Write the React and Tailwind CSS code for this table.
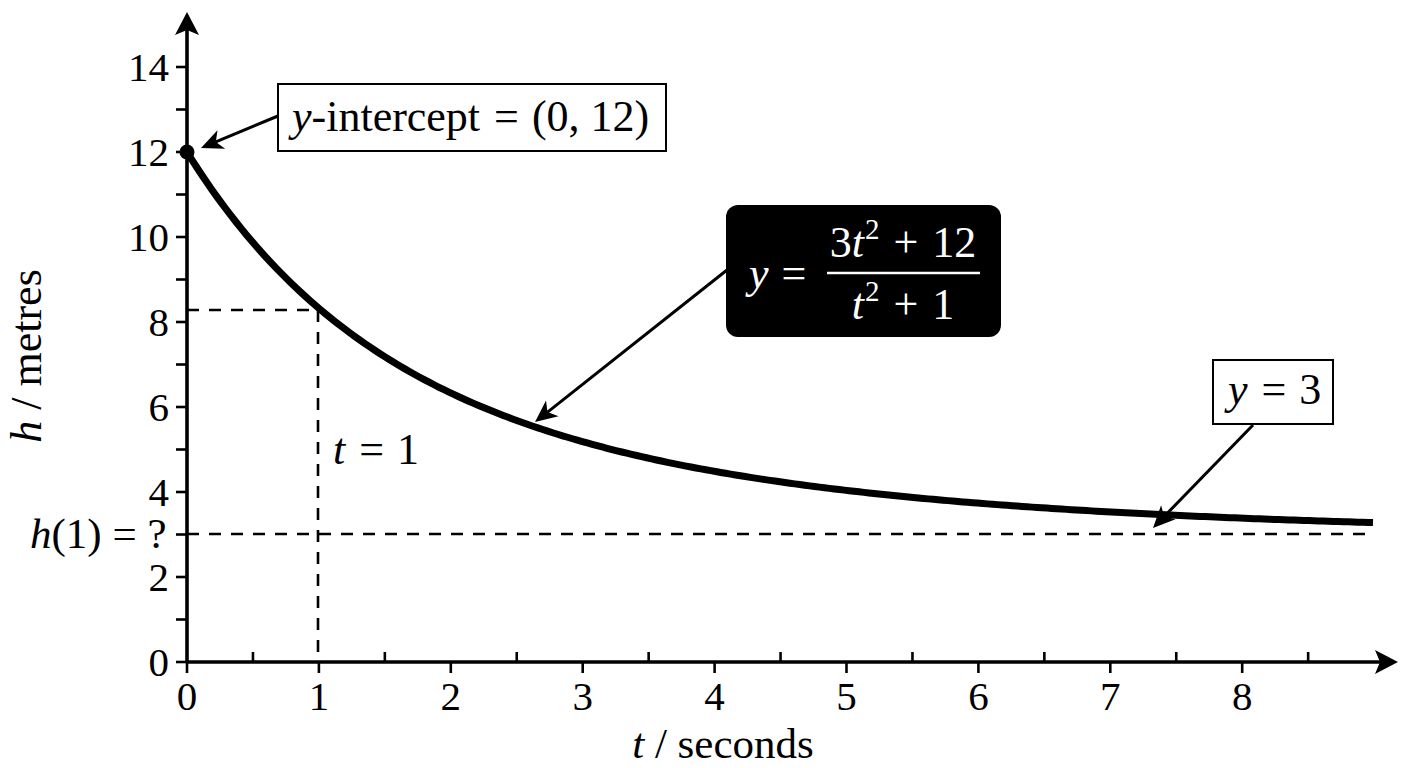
import React from "react";

const X = (t) => 187 + 131.9 * t;
const Y = (v) => 662 - 42.5 * v;

function curveD() {
  const pts = [];
  const tMax = (1373 - 187) / 131.9;
  const n = 240;
  for (let i = 0; i <= n; i++) {
    const t = (tMax * i) / n;
    const v = 3 + 9 * (0.5 * Math.exp(-0.8 * t) + 0.5 * Math.exp(-0.31 * t));
    pts.push(`${X(t).toFixed(2)},${Y(v).toFixed(2)}`);
  }
  return "M" + pts.join(" L");
}

function Arrow({ x1, y1, x2, y2, L = 22, W = 10, N = 6, sw = 3 }) {
  const dx = x2 - x1;
  const dy = y2 - y1;
  const len = Math.hypot(dx, dy);
  const ux = dx / len;
  const uy = dy / len;
  const px = -uy;
  const py = ux;
  const bx = x2 - ux * L;
  const by = y2 - uy * L;
  const nx = x2 - ux * (L - N);
  const ny = y2 - uy * (L - N);
  const pts = [
    [x2, y2],
    [bx + px * W, by + py * W],
    [nx, ny],
    [bx - px * W, by - py * W],
  ]
    .map((p) => `${p[0].toFixed(1)},${p[1].toFixed(1)}`)
    .join(" ");
  return (
    <g>
      <line x1={x1} y1={y1} x2={nx} y2={ny} stroke="black" strokeWidth={sw} />
      <polygon points={pts} fill="black" />
    </g>
  );
}

const FONT = "'Liberation Serif', 'Times New Roman', serif";

export default function App() {
  const yMajor = [0, 2, 4, 6, 8, 10, 12, 14];
  const yMinor = [1, 3, 5, 7, 9, 11, 13];
  const xMajor = [0, 1, 2, 3, 4, 5, 6, 7, 8];
  const xMinor = [0.5, 1.5, 2.5, 3.5, 4.5, 5.5, 6.5, 7.5, 8.5];

  return (
    <div className="w-[1408px] h-[768px] bg-white overflow-hidden">
      <svg
        width="1408"
        height="768"
        viewBox="0 0 1408 768"
        style={{ fontFamily: FONT }}
        className="block"
      >
        {/* dashed guide lines */}
        <g stroke="black" strokeWidth="2.6" strokeDasharray="12 10" fill="none">
          <line x1="187" y1="310" x2="318" y2="310" />
          <line x1="318" y1="310" x2="318" y2="662" />
          <line x1="187" y1="534" x2="1373" y2="534" />
        </g>

        {/* axes */}
        <Arrow x1={187} y1={662} x2={187} y2={12} L={23} W={12} N={5} sw={3.6} />
        <Arrow x1={187} y1={662} x2={1398} y2={662} L={23} W={12} N={5} sw={3.6} />

        {/* ticks */}
        <g stroke="black" strokeWidth="2.6">
          {yMajor.concat(yMinor).map((v) => (
            <line key={"y" + v} x1="176" y1={Y(v)} x2="187" y2={Y(v)} />
          ))}
          {xMajor.map((t) => (
            <line key={"xm" + t} x1={X(t)} y1="662" x2={X(t)} y2="673" />
          ))}
          {xMinor.map((t) => (
            <line key={"xn" + t} x1={X(t)} y1="652" x2={X(t)} y2="662" />
          ))}
        </g>

        {/* tick labels */}
        <g fontSize="41" fill="black">
          {yMajor.map((v) => (
            <text key={"yl" + v} x="169" y={Y(v) + 14} textAnchor="end">
              {v}
            </text>
          ))}
          {xMajor.map((t) => (
            <text key={"xl" + t} x={X(t)} y="710" textAnchor="middle">
              {t}
            </text>
          ))}
        </g>

        {/* axis titles */}
        <text x="723" y="758" fontSize="43" textAnchor="middle">
          <tspan fontStyle="italic">t</tspan> / seconds
        </text>
        <text
          x="41"
          y="356"
          fontSize="44"
          textAnchor="middle"
          transform="rotate(-90 41 356)"
        >
          <tspan fontStyle="italic">h</tspan> / metres
        </text>

        {/* curve */}
        <path d={curveD()} fill="none" stroke="black" strokeWidth="7" strokeLinejoin="round" />
        <circle cx="187" cy="152" r="7.5" fill="black" />

        {/* labels */}
        <text x="333" y="464" fontSize="44">
          <tspan fontStyle="italic">t</tspan>
          <tspan dx="3"> = </tspan>
          <tspan dx="2">1</tspan>
        </text>
        <text x="30" y="548" fontSize="43">
          <tspan fontStyle="italic">h</tspan>(1) = ?
        </text>

        {/* y-intercept box */}
        <rect x="278" y="84" width="388" height="67" fill="white" stroke="black" strokeWidth="2" />
        <text x="292" y="131" fontSize="44">
          <tspan fontStyle="italic">y</tspan>-intercept
          <tspan dx="3"> = </tspan>
          <tspan dx="2">(0, 12)</tspan>
        </text>
        <Arrow x1={278} y1={116} x2={201} y2={148} />

        {/* formula box */}
        <rect x="726" y="205" width="275" height="132" rx="12" fill="black" />
        <g fill="white" fontSize="44">
          <text x="749" y="288">
            <tspan fontStyle="italic">y</tspan>
            <tspan dx="2"> =</tspan>
          </text>
          <text x="903" y="257" textAnchor="middle">
            <tspan>3</tspan>
            <tspan fontStyle="italic">t</tspan>
            <tspan fontSize="29" dy="-18" dx="1">2</tspan>
            <tspan dy="18" dx="3"> + </tspan>
            <tspan dx="3">12</tspan>
          </text>
          <line x1="827" y1="273" x2="980" y2="273" stroke="white" strokeWidth="2.5" />
          <text x="903" y="319" textAnchor="middle">
            <tspan fontStyle="italic">t</tspan>
            <tspan fontSize="29" dy="-18" dx="1">2</tspan>
            <tspan dy="18" dx="3"> + </tspan>
            <tspan dx="3">1</tspan>
          </text>
        </g>
        <Arrow x1={727} y1={270} x2={535} y2={422} />

        {/* y = 3 box */}
        <rect x="1213" y="360" width="120" height="64" fill="white" stroke="black" strokeWidth="2" />
        <text x="1228" y="404" fontSize="44">
          <tspan fontStyle="italic">y</tspan>
          <tspan dx="3"> = </tspan>
          <tspan dx="2">3</tspan>
        </text>
        <Arrow x1={1253} y1={425} x2={1153} y2={528} />
      </svg>
    </div>
  );
}
